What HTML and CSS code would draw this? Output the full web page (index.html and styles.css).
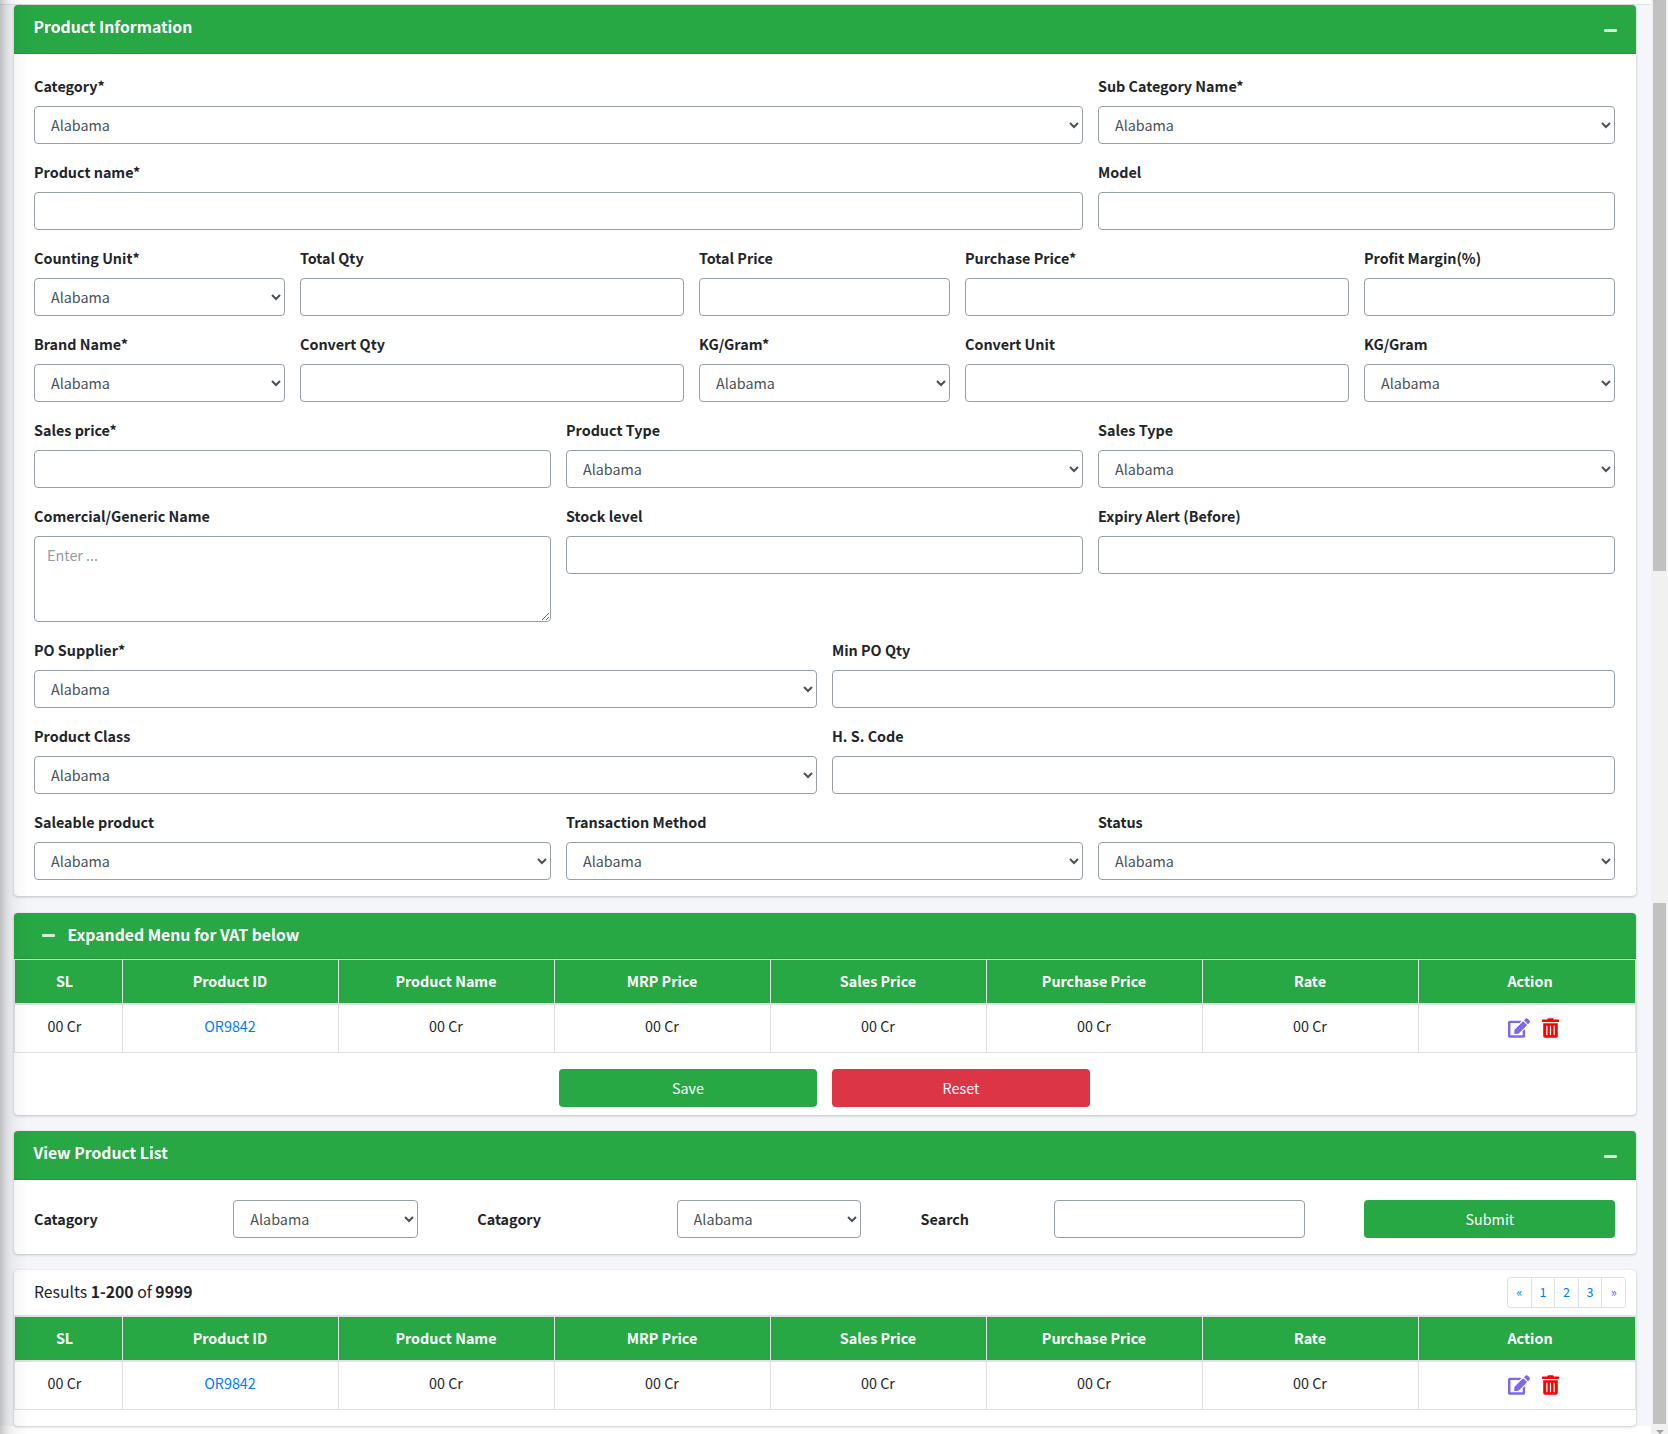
FILE: index.html
```html
<!DOCTYPE html>
<html lang="en">
<head>
<meta charset="utf-8">
<title>Product Information</title>
<link rel="stylesheet" href="styles.css">
</head>
<body>
<svg class="sprite" aria-hidden="true">
  <symbol id="i-edit" viewBox="0 0 576 512"><path d="M402.6 83.2l90.2 90.2c3.8 3.8 3.8 10 0 13.8L274.4 405.6l-92.8 10.3c-12.4 1.4-22.9-9.1-21.5-21.5l10.3-92.8L388.8 83.2c3.8-3.8 10-3.8 13.800 0zm162-22.9l-48.800-48.800c-15.200-15.200-39.900-15.200-55.200 0l-35.400 35.400c-3.800 3.800-3.800 10 0 13.800l90.200 90.200c3.800 3.800 10 3.800 13.800 0l35.400-35.400c15.200-15.300 15.200-40 0-55.200zM384 346.200V448H64V128h229.800c3.200 0 6.200-1.300 8.500-3.500l40-40c7.600-7.600 2.200-20.500-8.500-20.500H48C21.500 64 0 85.500 0 112v352c0 26.500 21.500 48 48 48h352c26.500 0 48-21.500 48-48V306.200c0-10.700-12.900-16-20.500-8.500l-40 40c-2.200 2.300-3.500 5.300-3.500 8.500z"/></symbol>
  <symbol id="i-trash" viewBox="0 0 448 512"><path d="M32 464a48 48 0 0 0 48 48h288a48 48 0 0 0 48-48V128H32zm272-256a16 16 0 0 1 32 0v224a16 16 0 0 1-32 0zm-96 0a16 16 0 0 1 32 0v224a16 16 0 0 1-32 0zm-96 0a16 16 0 0 1 32 0v224a16 16 0 0 1-32 0zM432 32H312l-9.400-18.700A24 24 0 0 0 281.100 0H166.800a23.700 23.700 0 0 0-21.400 13.300L136 32H16A16 16 0 0 0 0 48v32a16 16 0 0 0 16 16h416a16 16 0 0 0 16-16V48a16 16 0 0 0-16-16z"/></symbol>
</svg>
<div class="sidebar-edge"></div>
<div class="page">
  <div class="content">
    <div class="navbar"></div>
    <main class="main">
      <section class="card">
        <header class="card-header tall"><h3>Product Information</h3><span class="minus"></span></header>
        <div class="form-grid">
          <div class="field c8"><label>Category*</label><select><option>Alabama</option></select></div>
          <div class="field c4"><label>Sub Category Name*</label><select><option>Alabama</option></select></div>

          <div class="field c8"><label>Product name*</label><input type="text"></div>
          <div class="field c4"><label>Model</label><input type="text"></div>

          <div class="field c2"><label>Counting Unit*</label><select><option>Alabama</option></select></div>
          <div class="field c3"><label>Total Qty</label><input type="text"></div>
          <div class="field c2"><label>Total Price</label><input type="text"></div>
          <div class="field c3"><label>Purchase Price*</label><input type="text"></div>
          <div class="field c2"><label>Profit Margin(%)</label><input type="text"></div>

          <div class="field c2"><label>Brand Name*</label><select><option>Alabama</option></select></div>
          <div class="field c3"><label>Convert Qty</label><input type="text"></div>
          <div class="field c2"><label>KG/Gram*</label><select><option>Alabama</option></select></div>
          <div class="field c3"><label>Convert Unit</label><input type="text"></div>
          <div class="field c2"><label>KG/Gram</label><select><option>Alabama</option></select></div>

          <div class="field c4"><label>Sales price*</label><input type="text"></div>
          <div class="field c4"><label>Product Type</label><select><option>Alabama</option></select></div>
          <div class="field c4"><label>Sales Type</label><select><option>Alabama</option></select></div>

          <div class="field c4"><label>Comercial/Generic Name</label><textarea placeholder="Enter ..."></textarea></div>
          <div class="field c4"><label>Stock level</label><input type="text"></div>
          <div class="field c4"><label>Expiry Alert (Before)</label><input type="text"></div>

          <div class="field c6"><label>PO Supplier*</label><select><option>Alabama</option></select></div>
          <div class="field c6"><label>Min PO Qty</label><input type="text"></div>

          <div class="field c6"><label>Product Class</label><select><option>Alabama</option></select></div>
          <div class="field c6"><label>H. S. Code</label><input type="text"></div>

          <div class="field c4"><label>Saleable product</label><select><option>Alabama</option></select></div>
          <div class="field c4"><label>Transaction Method</label><select><option>Alabama</option></select></div>
          <div class="field c4"><label>Status</label><select><option>Alabama</option></select></div>
        </div>
      </section>

      <section class="card vat">
        <header class="card-header short"><span class="minus"></span><h3>Expanded Menu for VAT below</h3></header>
        <table class="products">
          <thead><tr><th class="sl">SL</th><th>Product ID</th><th>Product Name</th><th>MRP Price</th><th>Sales Price</th><th>Purchase Price</th><th>Rate</th><th class="act">Action</th></tr></thead>
          <tbody><tr><td class="sl">00 Cr</td><td><a href="#">OR9842</a></td><td>00 Cr</td><td>00 Cr</td><td>00 Cr</td><td>00 Cr</td><td>00 Cr</td>
            <td><div class="actions"><svg class="edit"><use href="#i-edit"/></svg><svg class="trash"><use href="#i-trash"/></svg></div></td></tr></tbody>
        </table>
        <div class="buttons"><button class="btn green">Save</button><button class="btn red">Reset</button></div>
      </section>

      <section class="card filter">
        <header class="card-header tall"><h3>View Product List</h3><span class="minus"></span></header>
        <div class="filter-row">
          <div class="filter-item"><label>Catagory</label><select><option>Alabama</option></select></div>
          <div class="filter-item"><label>Catagory</label><select><option>Alabama</option></select></div>
          <div class="filter-item search"><label>Search</label><input type="text"></div>
          <button class="btn green">Submit</button>
        </div>
      </section>

      <section class="card results">
        <div class="results-bar">
          <p>Results <b>1-200</b> of <b>9999</b></p>
          <nav class="pagination"><a href="#">«</a><a href="#">1</a><a href="#">2</a><a href="#">3</a><a href="#">»</a></nav>
        </div>
        <table class="products thick">
          <thead><tr><th class="sl">SL</th><th>Product ID</th><th>Product Name</th><th>MRP Price</th><th>Sales Price</th><th>Purchase Price</th><th>Rate</th><th class="act">Action</th></tr></thead>
          <tbody><tr><td class="sl">00 Cr</td><td><a href="#">OR9842</a></td><td>00 Cr</td><td>00 Cr</td><td>00 Cr</td><td>00 Cr</td><td>00 Cr</td>
            <td><div class="actions"><svg class="edit"><use href="#i-edit"/></svg><svg class="trash"><use href="#i-trash"/></svg></div></td></tr></tbody>
        </table>
      </section>
    </main>
    <footer class="footer"></footer>
  </div>
  <div class="scrollbar">
    <div class="thumb upper"></div>
    <div class="thumb lower"></div>
    <div class="arrow"></div>
  </div>
</div>
</body>
</html>
```
FILE: styles.css
```css
* { box-sizing: border-box; }
html, body { height: 100%; overflow: hidden; }
body {
  margin: 0;
  font-family: "Noto Sans CJK SC", "Open Sans", sans-serif;
  font-size: 14.35px;
  line-height: 24px;
  color: #212529;
  background: #f4f6f9;
}
.sprite { position: absolute; width: 0; height: 0; }
.sidebar-edge {
  position: absolute;
  z-index: 5;
  top: -40px;
  left: -250px;
  width: 250px;
  height: 1520px;
  box-shadow: 0 14px 28px rgba(0,0,0,.25), 0 10px 10px rgba(0,0,0,.22);
  pointer-events: none;
}
.page { display: flex; height: 1434px; }
.content { flex: 1; display: flex; flex-direction: column; min-width: 0; }
.navbar { height: 5px; flex: none; background: #fff; border-bottom: 1px solid #dee2e6; }
.main {
  position: relative;
  z-index: 1;
  flex: none;
  height: 1421px;
  padding: 0 15px 0 14px;
  display: flex;
  flex-direction: column;
}
.footer { flex: 1; background: #fff; }

.card {
  flex: none;
  background: #fff;
  border-radius: 4px;
  box-shadow: 0 0 1px rgba(0,0,0,.125), 0 1px 3px rgba(0,0,0,.2);
}
.card-header {
  display: flex;
  background: #28a745;
  color: #fff;
  border-bottom: 1px solid #24963e;
  border-radius: 4px 4px 0 0;
}
.card-header h3 { margin: 0; font-size: 15.75px; line-height: 21px; font-weight: 700; }
.card-header.tall { height: 49px; padding: 11px 19px 0 19.5px; justify-content: space-between; }
.card-header.short { height: 46px; padding: 11px 28px; }
.minus { width: 13px; height: 3px; border-radius: 1px; background: #d4edda; }
.tall .minus { margin-top: 13px; }
.short .minus { margin: 10px 12.5px 0 0; }

.form-grid {
  display: grid;
  grid-template-columns: repeat(12, minmax(0, 1fr));
  gap: 16px 15px;
  padding: 20px 21px 16px 20px;
  height: 842px;
  align-content: start;
}
.field { display: flex; flex-direction: column; }
label { font-weight: 700; line-height: 24px; }
.field label { margin-bottom: 8px; }
.c2 { grid-column: span 2; }
.c3 { grid-column: span 3; }
.c4 { grid-column: span 4; }
.c6 { grid-column: span 6; }
.c8 { grid-column: span 8; }

input, select, textarea {
  display: block;
  width: 100%;
  height: 38px;
  margin: 0;
  padding: 6px 12px;
  font: inherit;
  color: #495057;
  background: #fff;
  border: 1px solid #979fa7;
  border-radius: 4px;
  outline: 0;
}
select { padding: 5px 12px 7px; }
textarea { height: 86px; resize: vertical; }
textarea::placeholder { color: #939ba2; }

.vat { margin-top: 17px; height: 202px; }
.filter { margin-top: 16px; height: 123px; }
.results { margin-top: 16px; height: 156px; }

.products {
  width: 100%;
  table-layout: fixed;
  border-collapse: separate;
  border-spacing: 0;
  border-top: 1px solid #dee2e6;
  border-left: 1px solid #dee2e6;
  text-align: center;
}
.products.thick { border-top-width: 2px; }
.products th, .products td { padding: 0 1px 0 0; border-right: 1px solid #dee2e6; }
.products th {
  width: 216px;
  height: 45px;
  padding-bottom: 2px;
  background: #28a745;
  color: #fff;
  border-bottom: 2px solid #dee2e6;
}
.products td { height: 48px; padding-bottom: 6px; border-bottom: 1px solid #dee2e6; }
.products th.sl { width: 108px; }
.products .sl { padding-right: 8px; }
.products th.act { width: auto; padding: 0 0 2px 6px; }
a { color: #007bff; text-decoration: none; }
.actions { display: flex; justify-content: center; gap: 12px; padding: 5px 0 0 14px; }
.edit { width: 22px; height: 20px; fill: #7b68ee; }
.trash { width: 17px; height: 20px; fill: #f00; }

.buttons { display: flex; justify-content: center; gap: 15px; padding: 16px 2px 0 0; }
.btn {
  width: 258px;
  height: 38px;
  padding: 0 0 0 1px;
  border: 0;
  border-radius: 4px;
  color: #fff;
  font: inherit;
}
.green { background: #28a745; }
.red { background: #dc3545; }

.filter-row { display: flex; padding: 20px 21px 0 20px; }
.filter-row .btn { width: 251px; }
.filter-item { width: 443.3px; display: flex; align-items: center; }
.filter-item label { width: 199.3px; flex: none; }
.filter-item select { width: 184.7px; }
.filter-item.search label { width: 133px; }
.filter-item.search input { width: 251px; }

.results-bar {
  height: 45px;
  padding: 7px 10px 0 20px;
  display: flex;
  justify-content: space-between;
}
.results-bar p { margin: 3px 0 0; font-size: 15.75px; }
.pagination { display: flex; width: 119px; height: 31px; border: 1px solid #dee2e6; border-radius: 3px; }
.pagination a { flex: 1; text-align: center; font-size: 12.6px; line-height: 27px; border-left: 1px solid #dee2e6; }
.pagination a:first-child { border-left: 0; }

.scrollbar {
  width: 17px;
  flex: none;
  display: flex;
  flex-direction: column;
  align-items: center;
  background: #f1f1f1;
}
.thumb { width: 13px; background: #c1c1c1; }
.upper { height: 572px; }
.lower { height: 521px; margin-top: 332px; }
.arrow { margin-top: 6px; border: 4px solid transparent; border-top-color: #a3a3a3; border-bottom: 0; height: 3px; }
```
